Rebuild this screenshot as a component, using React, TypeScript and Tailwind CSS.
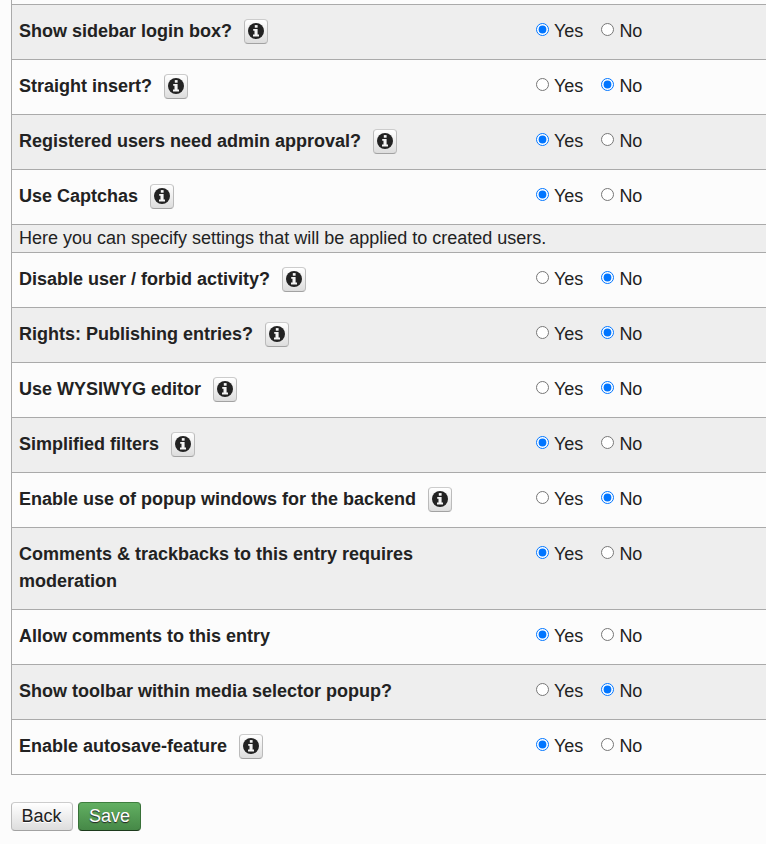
type Setting = { label: string; info?: boolean; yes: boolean };

const general: Setting[] = [
  { label: "Show sidebar login box?", info: true, yes: true },
  { label: "Straight insert?", info: true, yes: false },
  { label: "Registered users need admin approval?", info: true, yes: true },
  { label: "Use Captchas", info: true, yes: true },
];

const created: Setting[] = [
  { label: "Disable user / forbid activity?", info: true, yes: false },
  { label: "Rights: Publishing entries?", info: true, yes: false },
  { label: "Use WYSIWYG editor", info: true, yes: false },
  { label: "Simplified filters", info: true, yes: true },
  { label: "Enable use of popup windows for the backend", info: true, yes: false },
  { label: "Comments & trackbacks to this entry requires moderation", yes: true },
  { label: "Allow comments to this entry", yes: true },
  { label: "Show toolbar within media selector popup?", yes: false },
  { label: "Enable autosave-feature", info: true, yes: true },
];

function InfoIcon() {
  return (
    <svg viewBox="0 0 16 16" className="h-4 w-4" aria-hidden="true">
      <circle cx="8" cy="8" r="8" fill="#222" />
      <path d="M6.8 2.1h2.8v2.6H6.8z" fill="#f8f8f8" />
      <path d="M5.2 6h4.4v5.6h1.4v1.9H5v-1.9h1.5V7.8H5.2z" fill="#f4f4f4" />
    </svg>
  );
}

function Radio({ name, label, checked }: { name: string; label: string; checked: boolean }) {
  return (
    <label className="flex items-start">
      <input type="radio" name={name} defaultChecked={checked} className="mt-[5px] mr-[5px] h-[13px] w-[13px] shrink-0" />
      {label}
    </label>
  );
}

function Row({ setting, shaded }: { setting: Setting; shaded: boolean }) {
  return (
    <fieldset className={`flex border-t border-[#aaa] pt-[13px] pb-[14px] pl-[7px] ${shaded ? "bg-[#eee]" : ""}`}>
      <div className="flex w-[480px] shrink-0 items-start font-bold">
        <span>{setting.label}</span>
        {setting.info && (
          <button
            type="button"
            aria-label="More"
            className="mt-px ml-3 flex h-[25px] w-6 shrink-0 items-start justify-center rounded-[4px] border border-[#bbb] border-t-[#ccc] border-b-[#a2a2a2] bg-linear-to-b from-white to-[#ddd] pt-[3px]"
          >
            <InfoIcon />
          </button>
        )}
      </div>
      <div className="ml-[37px] flex gap-[18px]">
        <Radio name={setting.label} label="Yes" checked={setting.yes} />
        <Radio name={setting.label} label="No" checked={!setting.yes} />
      </div>
    </fieldset>
  );
}

export default function App() {
  return (
    <main className="h-[844px] overflow-hidden bg-[#fcfcfc] pl-[11px] font-['Liberation_Sans',Arial,sans-serif] text-[18px] leading-[27px] text-[#222]">
      <div className="border-b border-l border-[#aaa] pt-1">
        {general.map((s, i) => (
          <Row key={s.label} setting={s} shaded={i % 2 === 0} />
        ))}
        <p className="border-t border-[#aaa] bg-[#eee] pl-[7px]">
          Here you can specify settings that will be applied to created users.
        </p>
        {created.map((s, i) => (
          <Row key={s.label} setting={s} shaded={i % 2 === 1} />
        ))}
      </div>
      <div className="mt-[27px] flex gap-[5px]">
        <button type="button" className="h-[29px] w-[62px] rounded-[4px] border border-[#bbb] border-t-[#ccc] border-b-[#a2a2a2] bg-linear-to-b from-white to-[#ddd] pr-px [text-shadow:0_1px_0_#fff]">
          Back
        </button>
        <button type="button" className="h-[29px] w-[63px] rounded-[4px] border border-[#387038] border-t-[#3e7e3e] border-b-[#1c3a1c] bg-linear-to-b from-[#62b062] to-[#468847] text-white [text-shadow:0_1px_1px_#222]">
          Save
        </button>
      </div>
    </main>
  );
}
